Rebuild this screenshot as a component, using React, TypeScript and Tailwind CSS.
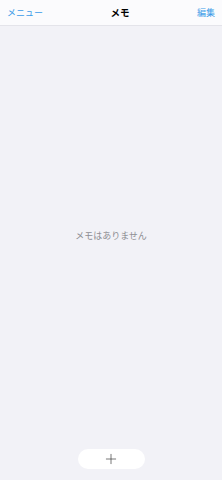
import { Plus } from "lucide-react";

export default function App() {
  return (
    <div
      className="flex h-[480px] w-[222px] flex-col bg-[#f2f2f7]"
      style={{ fontFamily: '"Noto Sans CJK JP", "Noto Sans", sans-serif' }}
    >
      <header className="flex h-[26px] shrink-0 items-center justify-between border-b border-[#e4e4ea] bg-[#fbfbfd] px-[7px]">
        <span className="text-[9px] text-[#3b9be8]">メニュー</span>
        <span className="text-[9.5px] font-bold text-black">メモ</span>
        <span className="text-[9px] text-[#3b9be8]">編集</span>
      </header>
      <main className="flex flex-1 items-center justify-center pb-[4px]">
        <p className="text-[9px] text-[#8e8e93]">メモはありません</p>
      </main>
      <div className="flex justify-center pb-[11px]">
        <button className="flex h-[20px] w-[67px] items-center justify-center rounded-full bg-white">
          <Plus size={16} strokeWidth={1} className="text-[#333]" />
        </button>
      </div>
    </div>
  );
}
